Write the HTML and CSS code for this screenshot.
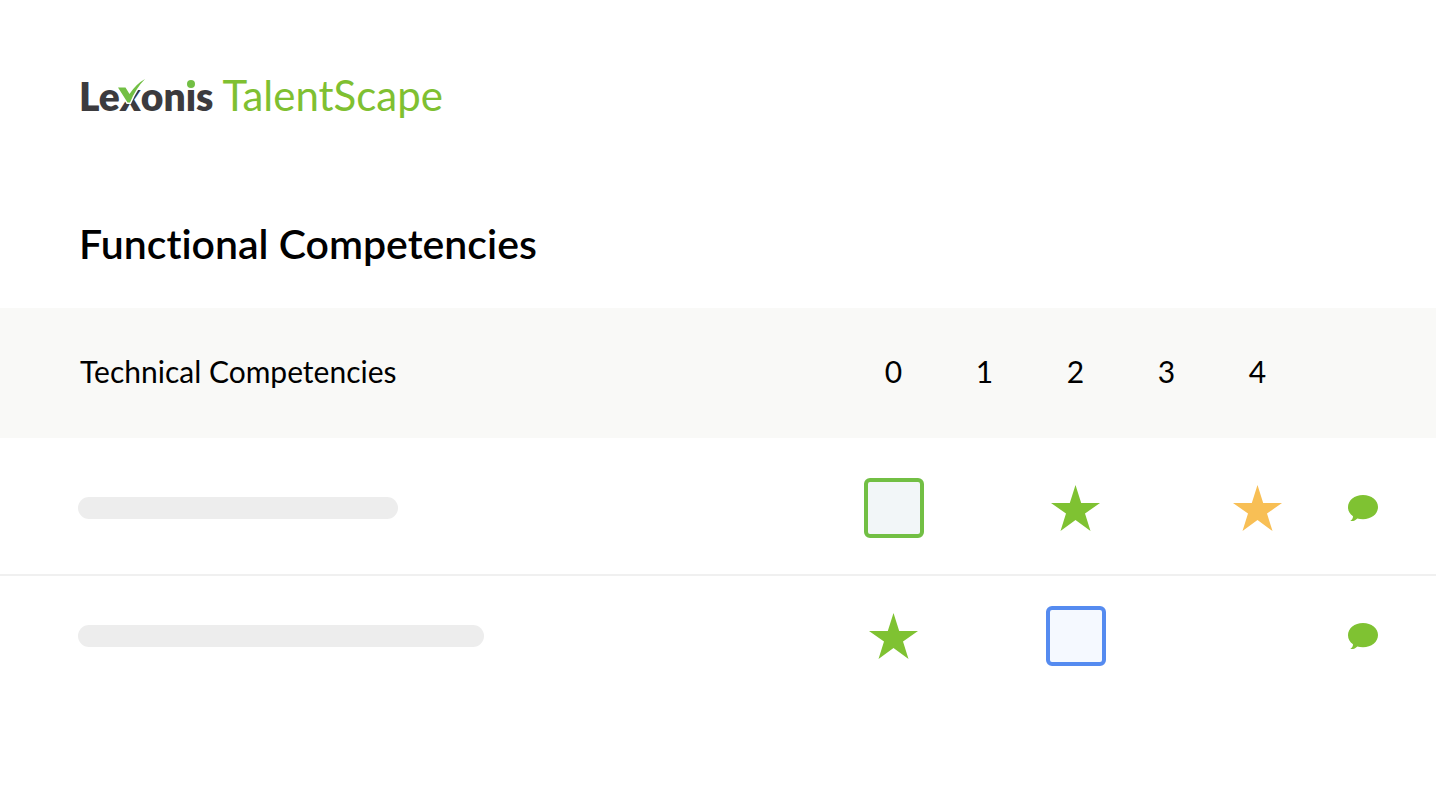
FILE: index.html
```
<!DOCTYPE html>
<html lang="en">
<head>
    <meta charset="UTF-8">
    <meta name="viewport" content="width=device-width, initial-scale=1.0">
    <title>Lexonis TalentScape</title>
    <link rel="stylesheet" href="styles.css">
</head>
<body>

<!-- Shared icons -->
<svg class="sprite" aria-hidden="true">
    <symbol id="star" viewBox="0 0 50 46">
        <path d="M24.5 0 L30.2 18 H49 L34 28.5 L39.5 46 L24.5 35 L9.5 46 L15 28.5 L0 18 H18.8 Z"/>
    </symbol>
    <symbol id="comment" viewBox="0 0 30 27">
        <path d="M15 0 C23.5 0 30 5.2 30 12 C30 19 23.5 24.2 15 24.2 C12.9 24.2 11 24 9.3 23.5 C7.5 25.3 5 26.5 2.3 26 C4 25 5 23.5 5 21.3 C1.8 19 0 16 0 12.3 C0 5.2 6.5 0 15 0 Z"/>
    </symbol>
</svg>

<header class="header">
    <div class="logo">
        <span class="logo-name">Le<span class="logo-x">x<svg class="logo-check" viewBox="0 0 28 26" aria-hidden="true"><path d="M0 8.5 H7.5 L11.500 15 Q18 5 27 0 Q18 9 12 23.5 H9.5 Z"/></svg></span>on<span class="logo-i">i</span>s</span>
        <span class="logo-product">TalentScape</span>
    </div>
</header>

<main>
    <h1 class="title">Functional Competencies</h1>

    <table class="competencies">
        <thead>
            <tr>
                <th class="name" scope="col">Technical Competencies</th>
                <th class="level" scope="col">0</th>
                <th class="level" scope="col">1</th>
                <th class="level" scope="col">2</th>
                <th class="level" scope="col">3</th>
                <th class="level" scope="col">4</th>
                <td class="note"></td>
            </tr>
        </thead>
        <tbody>
            <tr>
                <td><div class="bar bar-short"></div></td>
                <td><input type="checkbox" class="box box-green" aria-label="Level 0"></td>
                <td></td>
                <td><svg class="star" role="img" aria-label="Level 2"><use href="#star"/></svg></td>
                <td></td>
                <td><svg class="star star-gold" role="img" aria-label="Level 4"><use href="#star"/></svg></td>
                <td><button type="button" class="comment" aria-label="Comment"><svg><use href="#comment"/></svg></button></td>
            </tr>
            <tr>
                <td><div class="bar bar-long"></div></td>
                <td><svg class="star" role="img" aria-label="Level 0"><use href="#star"/></svg></td>
                <td></td>
                <td><input type="checkbox" class="box box-blue" aria-label="Level 2"></td>
                <td></td>
                <td></td>
                <td><button type="button" class="comment" aria-label="Comment"><svg><use href="#comment"/></svg></button></td>
            </tr>
        </tbody>
    </table>
</main>

</body>
</html>
```
FILE: styles.css
```
body {
    margin: 0;
    font-family: Lato, "Open Sans", sans-serif;
    font-variant-ligatures: none;
    background-color: #fff;
    color: #000;
}
.sprite {
    position: absolute;
    width: 0;
    height: 0;
}
.header {
    padding: 71px 79px 0;
}
.logo {
    display: flex;
    align-items: baseline;
    gap: 9px;
    font-size: 42px;
    line-height: 48px;
}
.logo-name {
    color: #3c3b3e;
    font-size: 39px;
    font-weight: 800;
}
.logo-x,
.logo-i {
    position: relative;
}
/* green tick laid over the x */
.logo-check {
    position: absolute;
    left: -2px;
    bottom: 14px;
    width: 28px;
    height: 26px;
    overflow: visible;
    fill: #72bf44;
    stroke: #fff;
    stroke-width: 3px;
    paint-order: stroke;
}
/* green dot of the i */
.logo-i::after {
    content: "";
    position: absolute;
    top: 7px;
    left: 1px;
    width: 8px;
    height: 8px;
    border-radius: 50%;
    background-color: #72bf44;
    box-shadow: 0 0 0 1px #fff;
}
.logo-product {
    color: #7fc031;
}
.title {
    margin: 0;
    padding: 100px 79px 40px;
    font-size: 41px;
    line-height: 48px;
    font-weight: 600;
}
.competencies {
    width: 100%;
    border-collapse: collapse;
    table-layout: fixed;
}
.competencies th,
.competencies td {
    padding: 0;
    text-align: center;
    font-size: 30px;
    font-weight: 400;
    line-height: 36px;
}
.competencies thead tr {
    height: 130px;
    background-color: #f9f9f7;
}
.competencies thead th {
    padding-bottom: 4px;
}
.competencies tbody td {
    height: 60px;
    padding: 30px 0;
}
.competencies tbody tr:first-child td {
    padding: 40px 0 36px;
    border-bottom: 2px solid #f0f0f0;
}
.competencies thead .name {
    padding-left: 80px;
    text-align: left;
}
.level {
    width: 91px;
}
.competencies .note {
    width: 133px;
}
.bar {
    height: 22px;
    max-width: 100%;
    margin-left: 78px;
    border-radius: 11px;
    background-color: #ededed;
}
.bar-short {
    width: 320px;
}
.bar-long {
    width: 406px;
}
.box {
    appearance: none;
    display: block;
    box-sizing: border-box;
    width: 60px;
    height: 60px;
    margin: 0 auto;
    border: 4px solid;
    border-radius: 6px;
    cursor: pointer;
}
.box-green {
    border-color: #72bf44;
    background-color: #f2f6f8;
}
.box-blue {
    border-color: #558bf0;
    background-color: #f5f9ff;
}
.star {
    display: block;
    width: 50px;
    height: 46px;
    margin: 0 auto;
    fill: #7fc232;
}
.star-gold {
    fill: #f8bf55;
}
.comment {
    display: block;
    margin: 0 0 0 45px;
    padding: 0;
    border: none;
    background: none;
    cursor: pointer;
}
.comment svg {
    display: block;
    width: 30px;
    height: 27px;
    fill: #7fc232;
}
```
